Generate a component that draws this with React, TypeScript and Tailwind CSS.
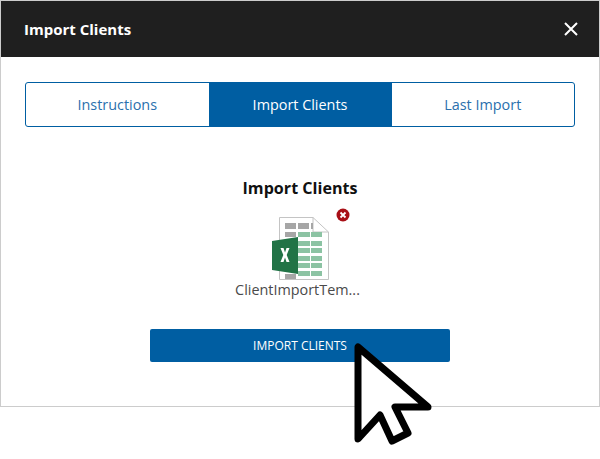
import React from 'react';

const font = { fontFamily: '"Open Sans", sans-serif' };

const ExcelIcon = () => (
  <svg width="57" height="63" viewBox="0 0 57 63" className="block">
    <path d="M7.5 0.5H41L56.5 15V62.5H7.5Z" fill="#fff" stroke="#c4c4c4" />
    <path d="M41 0.5V15H56.5" fill="none" stroke="#c4c4c4" />
    <rect x="13" y="6" width="11" height="6" fill="#a6a6a6" />
    <rect x="26" y="6" width="11" height="6" fill="#a6a6a6" />
    <rect x="39" y="6" width="2" height="6" fill="#a6a6a6" />
    <rect x="13" y="15" width="11" height="5" fill="#a6a6a6" />
    <rect x="13" y="57" width="11" height="5" fill="#a6a6a6" />
    {[15, 24, 31, 39, 46, 54].map((y) => (
      <React.Fragment key={y}>
        <rect x="26" y={y} width="12" height="5" fill="#8cc3a3" />
        <rect x="39" y={y} width="11" height="5" fill="#8cc3a3" />
      </React.Fragment>
    ))}
    <path d="M0 24L26 20V57L0 53Z" fill="#217346" />
    <path d="M8.5 31H11.5L13 35.5L14.5 31H17.5L14.7 38L17.5 45H14.5L13 40.5L11.5 45H8.5L11.3 38Z" fill="#fff" />
  </svg>
);

const App: React.FC = () => {
  return (
    <div className="relative w-[600px] h-[459px] bg-white overflow-hidden" style={font}>
      <div className="w-[600px] h-[407px] border border-[#cccccc] flex flex-col">
        <div className="h-[56px] bg-[#1f1f1f] flex items-center justify-between pl-[23px] pr-[20px]">
          <h1 className="text-[15px] font-bold text-white">Import Clients</h1>
          <svg width="16" height="16" viewBox="0 0 16 16">
            <path d="M2 2L14 14M14 2L2 14" stroke="#fff" strokeWidth="2" />
          </svg>
        </div>

        <div className="flex flex-col items-center px-6 pt-[25px]">
          <div className="w-[550px] h-[45px] flex border border-[#005ea2] rounded-[3px] overflow-hidden text-[14.4px]">
            <div className="flex-1 flex items-center justify-center text-[#2a70ad]">Instructions</div>
            <div className="w-[183px] flex items-center justify-center bg-[#005ea2] text-white">Import Clients</div>
            <div className="flex-1 flex items-center justify-center text-[#2a70ad]">Last Import</div>
          </div>

          <h2 className="mt-[50px] text-[16.1px] leading-[22px] font-bold text-[#111111]">Import Clients</h2>

          <div className="relative mt-[18px] w-[130px] flex flex-col items-center">
            <div className="ml-[1px]">
              <ExcelIcon />
            </div>
            <svg width="14" height="14" viewBox="0 0 14 14" className="absolute top-[-9px] right-[15px]">
              <circle cx="7" cy="7" r="6.5" fill="#a80f16" />
              <path d="M4.5 4.5L9.5 9.5M9.5 4.5L4.5 9.5" stroke="#fff" strokeWidth="1.8" />
            </svg>
            <span className="mr-[5px] text-[14.4px] leading-[20px] text-[#4a4a4a] whitespace-nowrap">ClientImportTem...</span>
          </div>

          <button className="mt-[29px] w-[300px] h-[33px] bg-[#005ea2] rounded-[2px] text-white text-[12px] flex items-center justify-center">
            IMPORT CLIENTS
          </button>
        </div>
      </div>

      <svg width="90" height="110" viewBox="0 0 90 110" className="absolute left-[350px] top-[340px]">
        <path
          d="M8 7V99L30 75L42 101L58 93L45 67H78Z"
          fill="#fff"
          stroke="#000"
          strokeWidth="7"
          strokeLinejoin="round"
        />
      </svg>
    </div>
  );
};

export default App;
